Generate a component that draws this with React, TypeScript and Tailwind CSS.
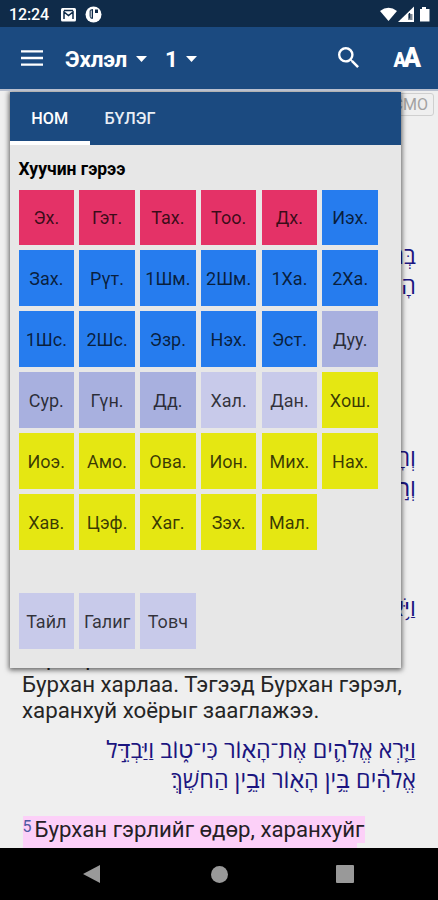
import React from 'react';

const tones = {
  rose: 'bg-[#e43267]',
  blue: 'bg-[#267cee]',
  iris: 'bg-[#a8b0df]',
  pale: 'bg-[#c8caea]',
  lime: 'bg-[#e5e712]',
};
type Tone = keyof typeof tones;

const books: [string, Tone][] = [
  ['Эх.', 'rose'], ['Гэт.', 'rose'], ['Тах.', 'rose'], ['Тоо.', 'rose'], ['Дх.', 'rose'], ['Иэх.', 'blue'],
  ['Зах.', 'blue'], ['Рүт.', 'blue'], ['1Шм.', 'blue'], ['2Шм.', 'blue'], ['1Ха.', 'blue'], ['2Ха.', 'blue'],
  ['1Шс.', 'blue'], ['2Шс.', 'blue'], ['Эзр.', 'blue'], ['Нэх.', 'blue'], ['Эст.', 'blue'], ['Дуу.', 'iris'],
  ['Сур.', 'iris'], ['Гүн.', 'iris'], ['Дд.', 'iris'], ['Хал.', 'pale'], ['Дан.', 'pale'], ['Хош.', 'lime'],
  ['Иоэ.', 'lime'], ['Амо.', 'lime'], ['Ова.', 'lime'], ['Ион.', 'lime'], ['Мих.', 'lime'], ['Нах.', 'lime'],
  ['Хав.', 'lime'], ['Цэф.', 'lime'], ['Хаг.', 'lime'], ['Зэх.', 'lime'], ['Мал.', 'lime'],
];
const extras: [string, Tone][] = [['Тайл', 'pale'], ['Галиг', 'pale'], ['Товч', 'pale']];

function Tiles({ items }: { items: [string, Tone][] }) {
  return (
    <div className="grid grid-cols-[repeat(6,55.6px)] gap-x-[5.2px] gap-y-[5.3px]">
      {items.map(([name, tone]) => (
        <button key={name} className={`flex h-[55.6px] items-center justify-center pt-px text-[18px] text-black/75 ${tones[tone]}`}>
          {name}
        </button>
      ))}
    </div>
  );
}

function Hebrew({ lines, className }: { lines: string[]; className: string }) {
  return (
    <div dir="rtl" className={`pr-[22px] font-['Open_Sans','Liberation_Sans',sans-serif] text-[23.300px] leading-[30px] whitespace-nowrap text-[#1b1580] ${className}`}>
      {lines.map((line) => <p key={line}>{line}</p>)}
    </div>
  );
}

function StatusBar() {
  return (
    <div className="flex h-[27px] shrink-0 items-center bg-[#0f2b49] pt-0.5 pl-[9px] text-white">
      <span className="w-[52px] text-[16px] font-medium tracking-[-0.1px]">12:24</span>
      <svg className="h-[14px] w-[15px]" viewBox="0 0 15 14">
        <rect width="15" height="13.5" rx="1.5" fill="white" />
        <path d="M3 11V4l4.5 3.5L12 4v7M3 2.5h9" fill="none" stroke="#0f2b49" strokeWidth="1.5" />
      </svg>
      <svg className="ml-[9px] h-[17px] w-[17px]" viewBox="0 0 17 17">
        <circle cx="8.5" cy="8.5" r="8" fill="white" />
        <path d="M4.6 4.8Q5 3 8 3v9.7H6.5Q4.3 12 4.6 8Z" fill="#0f2b49" />
        <path d="M6.2 4.5v7" stroke="white" strokeWidth="1" />
        <rect x="10" y="3.5" width="3" height="3.5" fill="#0f2b49" />
      </svg>
      <svg className="ml-auto h-[18px] w-[58px]" viewBox="380 4 58 18">
        <path d="M380 9Q388.500 2.500 397 9L388.500 19Z" fill="white" />
        <path d="M414 4.500V20H398Z" fill="white" />
        <path d="M408 12h4.500v6H408Z" fill="#7e8995" />
        <path d="M409.500 11v5.500" stroke="#0f2b49" strokeWidth="1.300" />
        <path d="M422 5h4v2h3.500v12.500h-9.500V7h2Z" fill="white" />
      </svg>
    </div>
  );
}

function Caret({ className }: { className: string }) {
  return <svg className={`mt-[2px] h-[6px] w-[11px] ${className}`} viewBox="0 0 11 6"><path d="M0 0h11L5.500 6Z" fill="white" /></svg>;
}

function AppBar() {
  return (
    <div className="flex h-[62px] shrink-0 items-center bg-[#1b4a80] pl-[21px] text-white">
      <svg className="h-[16px] w-[22px]" viewBox="0 0 22 16">
        <path d="M0 1.300h22M0 8h22M0 14.700h22" stroke="white" strokeWidth="2.300" />
      </svg>
      <span className="ml-[22px] w-[63px] pt-[3px] text-[22.500px] leading-none font-bold tracking-[-0.2px]">Эхлэл</span>
      <Caret className="ml-[8px]" />
      <span className="ml-[18px] w-[14px] pt-[3px] text-[22.500px] leading-none font-bold">1</span>
      <Caret className="ml-[7px]" />
      <svg className="mr-[34.500px] mb-px ml-auto h-[21px] w-[21px]" viewBox="3 3 17.500 17.500">
        <path fill="white" d="M15.500 14h-.79l-.28-.27A6.471 6.471 0 0 0 16 9.500 6.500 6.500 0 1 0 9.500 16c1.610 0 3.090-.59 4.230-1.570l.27.28v.79l5 4.990L20.490 19l-4.990-5zm-6 0C7.010 14 5 11.990 5 9.500S7.010 5 9.500 5 14 7.010 14 9.500 11.990 14 9.500 14z" />
      </svg>
      <div className="mr-[17px] flex w-[28px] origin-right scale-x-[0.93] items-baseline justify-end leading-none font-black">
        <span className="text-[20px]">A</span>
        <span className="-ml-[3.500px] text-[28.500px]">A</span>
      </div>
    </div>
  );
}

function BookPicker() {
  return (
    <div className="absolute top-[1px] left-[9.500px] h-[576px] w-[391.500px] bg-[#e7e7e7] shadow-[0_1px_5px_1px_rgba(0,0,0,0.6)]">
      <div className="flex h-[53px] bg-[#1b4a80] text-[16.200px] font-medium text-[#e8eef6]">
        <div className="flex w-[80.500px] items-center justify-center border-b-[4.500px] border-white pt-[5px] text-white">НОМ</div>
        <div className="flex w-[80px] items-center justify-center pt-px">БҮЛЭГ</div>
      </div>
      <div className="px-[9px]">
        <h2 className="h-[44.500px] pt-[12px] text-[17.500px] leading-[24px] font-bold text-black">Хуучин гэрээ</h2>
        <Tiles items={books} />
        <div className="h-[43.500px]" />
        <Tiles items={extras} />
      </div>
    </div>
  );
}

function NavBar() {
  return (
    <div className="flex h-[52px] shrink-0 items-center bg-black pl-[83px]">
      <svg className="h-[18px] w-[17px]" viewBox="0 0 17 18"><path d="M17 0v18L0 9Z" fill="#999" /></svg>
      <div className="ml-[111px] h-[17px] w-[17px] rounded-full bg-[#999]" />
      <div className="ml-[108px] h-[18px] w-[18px] rounded-[1px] bg-[#999]" />
    </div>
  );
}

export default function App() {
  return (
    <div className="flex h-[900px] w-[438px] flex-col overflow-hidden bg-[#efefef] font-['Roboto',sans-serif]">
      <StatusBar />
      <AppBar />
      <main className="relative h-[759px] shrink-0 overflow-hidden border-t-2 border-[#b9c0cf]">
        <div className="flex h-[25px] justify-end pr-[4px]">
          <span className="mt-0.5 h-[23px] rounded-[3px] border border-[#cfcfcf] px-[5px] text-[16px] leading-[22px] text-[#a2a2a2]">БСМО</span>
        </div>
        <Hebrew className="mt-[124px]" lines={['בְּרֵאשִׁ֖ית בָּרָ֣א אֱלֹהִ֑ים', 'הָאָֽרֶץ׃ הַשָּׁמַ֖יִם']} />
        <Hebrew className="mt-[142px]" lines={['וְהָאָ֗רֶץ הָיְתָ֥ה תֹ֙הוּ֙', 'וְר֣וּחַ אֱלֹהִ֔ים']} />
        <Hebrew className="mt-[90px]" lines={['וַיֹּ֥אמֶר אֱלֹהִ֖ים']} />
        <div className="mt-[22px] pl-[22px] text-[22.300px] leading-[26.500px] whitespace-nowrap text-[#252525]">
          <p>Тэр гэрэл сайн байгааг</p>
          <p>Бурхан харлаа. Тэгээд Бурхан гэрэл,</p>
          <p>харанхуй хоёрыг зааглажээ.</p>
        </div>
        <Hebrew className="mt-[10px]" lines={['וַיַּ֧רְא אֱלֹהִ֛ים אֶת־הָא֖וֹר כִּי־ט֑וֹב וַיַּבְדֵּ֣ל', 'אֱלֹהִ֔ים בֵּ֥ין הָא֖וֹר וּבֵ֥ין הַחֹשֶׁךְ׃']} />
        <div className="mt-[22px] ml-[22.500px] text-[22.200px] leading-[27px] whitespace-nowrap text-[#252025]">
          <p className="flex w-[342.500px] bg-[#fcd0f8]"><span className="w-[12px] text-[16px] leading-[21px] text-[#4e5aa0]">5</span>Бурхан гэрлийг өдөр, харанхуйг</p>
          <p className="w-[334px] bg-[#fcd0f8]">шөнө гэж нэрлэв.</p>
        </div>
        <BookPicker />
      </main>
      <NavBar />
    </div>
  );
}
